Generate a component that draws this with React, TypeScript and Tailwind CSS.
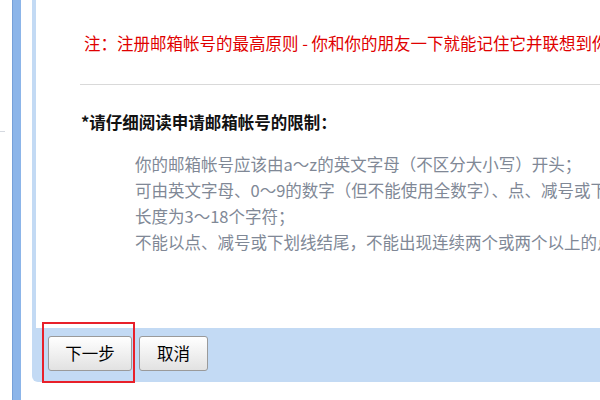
const rules = [
  "你的邮箱帐号应该由a～z的英文字母（不区分大小写）开头；",
  "可由英文字母、0～9的数字（但不能使用全数字）、点、减号或下划线组成；",
  "长度为3～18个字符；",
  "不能以点、减号或下划线结尾，不能出现连续两个或两个以上的点、减号。",
];

export default function App() {
  return (
    <div
      lang="zh-CN"
      className="relative flex w-[600px] h-[400px] overflow-hidden bg-white text-[16.5px]"
      style={{ fontFamily: '"Noto Sans CJK SC", sans-serif' }}
    >
      {/* Left edge */}
      <div className="w-[12px] shrink-0 pt-[131px]">
        <div className="h-px w-[5px] bg-[#d5d9e0]" />
      </div>
      <div className="w-[9px] shrink-0 border-l border-[#76a0d8] bg-[#8cb5e9]" />
      <div className="w-[11px] shrink-0" />

      {/* Main panel */}
      <div className="flex h-[382px] flex-1 flex-col rounded-bl-[6px] bg-[#c3daf4] pl-[4px]">
        <div className="h-[328px] bg-white pl-[44px] pt-[31px]">
          <p className="pl-[4px] leading-[24px] text-[#e00000] whitespace-nowrap">
            注：注册邮箱帐号的最高原则 - 你和你的朋友一下就能记住它并联想到你
          </p>
          <div className="mt-[29px] h-px bg-[#d9d9d9]" />
          <p className="mt-[25px] pl-px font-bold leading-[24px] text-[#111] whitespace-nowrap">
            *请仔细阅读申请邮箱帐号的限制：
          </p>
          <ul className="mt-[17px] pl-[55px] leading-[26px] text-[#808896] whitespace-nowrap">
            {rules.map((r) => (
              <li key={r}>{r}</li>
            ))}
          </ul>
        </div>

        {/* Footer */}
        <div className="flex gap-[7px] pl-[12px] pt-[8px]">
          <button className="h-[35px] w-[84px] rounded-[3px] border border-[#9a9a9a] bg-gradient-to-b from-white to-[#e2e2e2] text-[16.5px] text-black">
            下一步
          </button>
          <button className="h-[35px] w-[69px] rounded-[3px] border border-[#9a9a9a] bg-gradient-to-b from-white to-[#e2e2e2] text-[16.5px] text-black">
            取消
          </button>
        </div>
      </div>

      {/* Highlight box */}
      <div className="absolute left-[42px] top-[322px] h-[61px] w-[93px] border-2 border-[#e8202a]" />
    </div>
  );
}
